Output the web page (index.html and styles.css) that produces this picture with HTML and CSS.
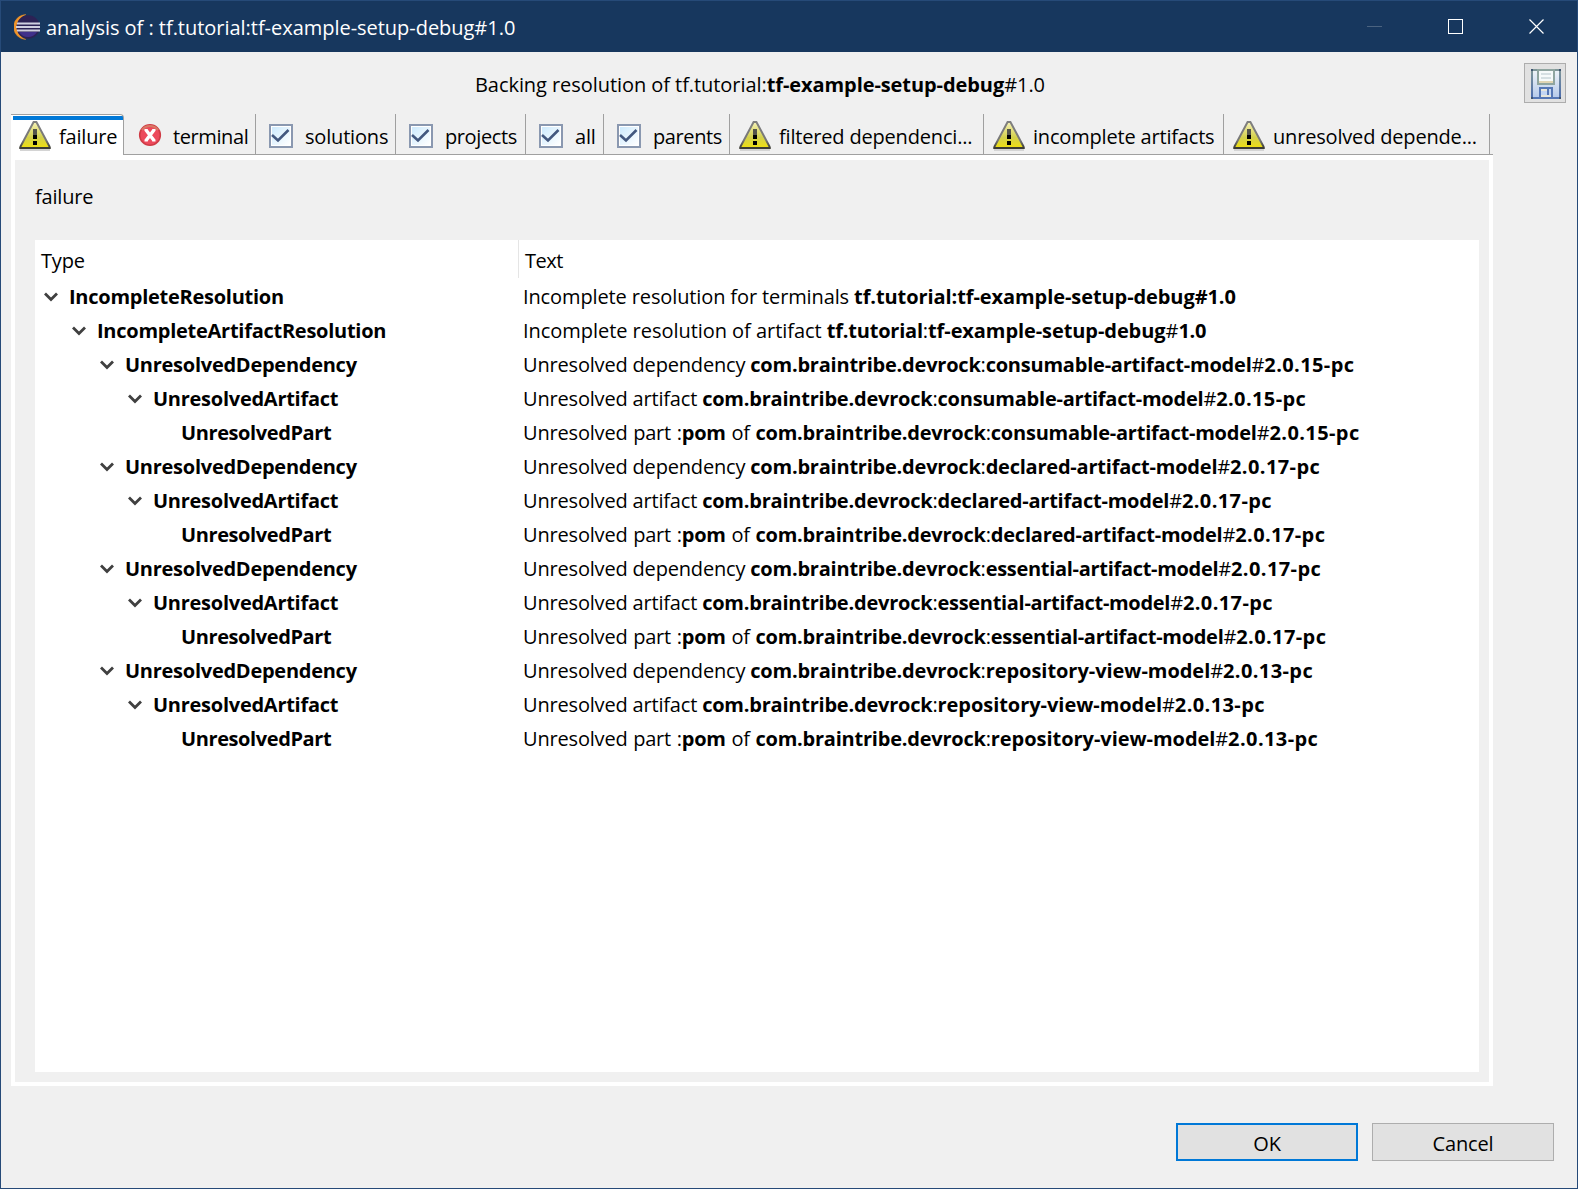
FILE: index.html
```
<!DOCTYPE html>
<html lang="en">
<head>
<meta charset="utf-8">
<title>analysis of : tf.tutorial:tf-example-setup-debug#1.0</title>
<link rel="stylesheet" href="styles.css">
</head>
<body>
<svg class="defs" width="0" height="0">
  <defs>
    <linearGradient id="warnFill" x1="0" y1="0" x2="0" y2="1">
      <stop offset="0" stop-color="#f6f2b8"/><stop offset="0.6" stop-color="#d3d04a"/><stop offset="1" stop-color="#f0e010"/>
    </linearGradient>
    <linearGradient id="warnEdge" x1="0" y1="0" x2="0" y2="1">
      <stop offset="0" stop-color="#808080"/><stop offset="0.7" stop-color="#777"/><stop offset="1" stop-color="#3c3c34"/>
    </linearGradient>
    <linearGradient id="checkFill" x1="0" y1="0" x2="1" y2="1">
      <stop offset="0" stop-color="#cdeafd"/><stop offset="1" stop-color="#ffffff"/>
    </linearGradient>
    <linearGradient id="diskFill" x1="0" y1="0" x2="0" y2="1">
      <stop offset="0" stop-color="#eef3f8"/><stop offset="1" stop-color="#b5c9ea"/>
    </linearGradient>
    <linearGradient id="diskEdge" x1="0" y1="0" x2="0" y2="1">
      <stop offset="0" stop-color="#7f9698"/><stop offset="1" stop-color="#4c6cae"/>
    </linearGradient>
  </defs>
  <symbol id="warning" viewBox="0 0 32 32">
    <path d="M1 30h30" stroke="#d4d4d4" stroke-width="2"/>
    <path d="M14.600 2h2.800L30.500 26.500v1.500h-29v-1.500z" fill="url(#warnFill)" stroke="url(#warnEdge)" stroke-width="2"/>
    <path d="M.5 28h31" stroke="#3c3c34" stroke-width="2"/>
    <path d="M14 9h4v6h-4z" fill="#55554a"/>
    <path d="M14 15h4v4h-4zM14 21h4v4h-4z" fill="#000"/>
  </symbol>
  <symbol id="error" viewBox="0 0 32 32">
    <circle cx="16" cy="15" r="10.300" fill="#ec4a5c" stroke="#cf3b45" stroke-width="1.600"/>
    <path d="M8 10a10 10 0 0 1 16 0" fill="none" stroke="#d97a66" stroke-width="2"/>
    <path d="M12 10l8 10.500M20 10l-8 10.500" stroke="#fff" stroke-width="3.400"/>
    <path d="M10.500 10h3M18.500 10h3M10.500 20.500h3M18.500 20.500h3" stroke="#fff" stroke-width="2"/>
  </symbol>
  <symbol id="check" viewBox="0 0 32 32">
    <rect x="5" y="5" width="22" height="22" fill="#fff" stroke="#8a98b0" stroke-width="2"/>
    <rect x="7" y="7" width="18" height="18" fill="url(#checkFill)"/>
    <path d="M7 15l6 5.500L23.500 10" fill="none" stroke="#43587f" stroke-width="2.600"/>
  </symbol>
  <symbol id="chevron" viewBox="0 0 14 10">
    <path d="M1 1.500l6 6 6-6" fill="none" stroke="#404040" stroke-width="2.800"/>
  </symbol>
</svg>
<div class="window">
  <header class="titlebar">
    <svg class="logo" width="26" height="26" viewBox="0 0 26 26">
      <path d="M12 .5A12.500 12.500 0 0 0 12 25.500A13.200 13.200 0 0 1 12 .5z" fill="#f0942a" stroke="#d98a30" stroke-width=".4"/>
      <circle cx="14.200" cy="13" r="11.700" fill="#2c2255"/>
      <path d="M5 18h18a10.500 10.500 0 0 1-18 0z" fill="#40308a"/>
      <path d="M3 9.500h23M2 13h24M3 16.500h23" stroke="#d0cfe0" stroke-width="2"/>
    </svg>
    <h1 class="caption">analysis of : tf.tutorial:tf-example-setup-debug#1.0</h1>
    <svg class="control" width="81" height="51" viewBox="0 0 81 51"><path d="M33 25.500h15" stroke="#4b6380"/></svg>
    <svg class="control" width="81" height="51" viewBox="0 0 81 51"><rect x="33.500" y="18.500" width="14" height="14" fill="none" stroke="#fff"/></svg>
    <svg class="control" width="81" height="51" viewBox="0 0 81 51"><path d="M33.500 18.500l14 14M47.500 18.500l-14 14" stroke="#fff" stroke-width="1.200"/></svg>
  </header>
  <div class="banner">
    <p class="summary">Backing resolution of tf.tutorial:<b class="setup">tf-example-setup-debug</b>#1.0</p>
    <button class="save" aria-label="Save">
      <svg width="30" height="30" viewBox="0 0 30 30">
        <rect x="1" y="1" width="28" height="28" fill="url(#diskFill)" stroke="url(#diskEdge)" stroke-width="2"/>
        <path d="M0 0h2v2h-2zM28 0h2v2h-2zM0 28h2v2h-2zM28 28h2v2h-2z" fill="#3f5570"/>
        <rect x="7" y="1" width="16" height="14" fill="#f6fafa" stroke="#8fa5a0" stroke-width="2"/>
        <path d="M10 5h10M10 9h10" stroke="#d5dfe2" stroke-width="2"/>
        <path d="M8 13h14" stroke="#e0d5b4" stroke-width="2"/>
        <path d="M9 29V19h12v10" fill="#c3d6f3" stroke="#5577b5" stroke-width="2"/>
        <path d="M10 21h6M10 27h10" stroke="#e6e6dc" stroke-width="2"/>
        <path d="M17 20v6" stroke="#5577b5" stroke-width="2"/>
        <path d="M2 29h26" stroke="#5577b5" stroke-width="2"/>
      </svg>
    </button>
  </div>
  <nav class="tabs">
    <div class="tab selected"><svg class="icon"><use href="#warning"/></svg><span>failure</span></div>
    <div class="tab t1 tight"><svg class="icon"><use href="#error"/></svg><span>terminal</span></div>
    <div class="tab t2"><svg class="icon"><use href="#check"/></svg><span>solutions</span></div>
    <div class="tab t3 tight"><svg class="icon"><use href="#check"/></svg><span>projects</span></div>
    <div class="tab t4"><svg class="icon"><use href="#check"/></svg><span>all</span></div>
    <div class="tab t5 tight"><svg class="icon"><use href="#check"/></svg><span>parents</span></div>
    <div class="tab t6"><svg class="icon"><use href="#warning"/></svg><span>filtered dependenci...</span></div>
    <div class="tab t7"><svg class="icon"><use href="#warning"/></svg><span>incomplete artifacts</span></div>
    <div class="tab t8"><svg class="icon"><use href="#warning"/></svg><span>unresolved depende...</span></div>
  </nav>
  <main class="page">
    <p class="label">failure</p>
    <div class="tree">
      <div class="head"><div class="type">Type</div><div class="text">Text</div></div>
      <div class="row l0"><div class="type"><svg class="chev"><use href="#chevron"/></svg><b>IncompleteResolution</b></div><div class="text terminals">Incomplete resolution for terminals <b class="setup">tf.tutorial:tf-example-setup-debug#1.0</b></div></div>
      <div class="row l1"><div class="type"><svg class="chev"><use href="#chevron"/></svg><b>IncompleteArtifactResolution</b></div><div class="text artifact">Incomplete resolution of artifact <b>tf.tutorial</b>:<b class="setup">tf-example-setup-debug</b>#<b>1.0</b></div></div>
      <div class="row l2"><div class="type"><svg class="chev"><use href="#chevron"/></svg><b>UnresolvedDependency</b></div><div class="text">Unresolved dependency <b>com.braintribe.devrock</b>:<b>consumable-artifact-model</b>#<b class="version">2.0.15-pc</b></div></div>
      <div class="row l3"><div class="type"><svg class="chev"><use href="#chevron"/></svg><b>UnresolvedArtifact</b></div><div class="text">Unresolved artifact <b>com.braintribe.devrock</b>:<b>consumable-artifact-model</b>#<b class="version">2.0.15-pc</b></div></div>
      <div class="row l4"><div class="type"><b>UnresolvedPart</b></div><div class="text">Unresolved part :<b>pom</b> of <b>com.braintribe.devrock</b>:<b>consumable-artifact-model</b>#<b class="version">2.0.15-pc</b></div></div>
      <div class="row l2"><div class="type"><svg class="chev"><use href="#chevron"/></svg><b>UnresolvedDependency</b></div><div class="text">Unresolved dependency <b>com.braintribe.devrock</b>:<b>declared-artifact-model</b>#<b class="version">2.0.17-pc</b></div></div>
      <div class="row l3"><div class="type"><svg class="chev"><use href="#chevron"/></svg><b>UnresolvedArtifact</b></div><div class="text">Unresolved artifact <b>com.braintribe.devrock</b>:<b>declared-artifact-model</b>#<b class="version">2.0.17-pc</b></div></div>
      <div class="row l4"><div class="type"><b>UnresolvedPart</b></div><div class="text">Unresolved part :<b>pom</b> of <b>com.braintribe.devrock</b>:<b>declared-artifact-model</b>#<b class="version">2.0.17-pc</b></div></div>
      <div class="row l2"><div class="type"><svg class="chev"><use href="#chevron"/></svg><b>UnresolvedDependency</b></div><div class="text">Unresolved dependency <b>com.braintribe.devrock</b>:<b class="essential">essential-artifact-model</b>#<b class="version">2.0.17-pc</b></div></div>
      <div class="row l3"><div class="type"><svg class="chev"><use href="#chevron"/></svg><b>UnresolvedArtifact</b></div><div class="text">Unresolved artifact <b>com.braintribe.devrock</b>:<b class="essential">essential-artifact-model</b>#<b class="version">2.0.17-pc</b></div></div>
      <div class="row l4"><div class="type"><b>UnresolvedPart</b></div><div class="text">Unresolved part :<b>pom</b> of <b>com.braintribe.devrock</b>:<b class="essential">essential-artifact-model</b>#<b class="version">2.0.17-pc</b></div></div>
      <div class="row l2"><div class="type"><svg class="chev"><use href="#chevron"/></svg><b>UnresolvedDependency</b></div><div class="text">Unresolved dependency <b>com.braintribe.devrock</b>:<b class="repository">repository-view-model</b>#<b class="version">2.0.13-pc</b></div></div>
      <div class="row l3"><div class="type"><svg class="chev"><use href="#chevron"/></svg><b>UnresolvedArtifact</b></div><div class="text">Unresolved artifact <b>com.braintribe.devrock</b>:<b class="repository">repository-view-model</b>#<b class="version">2.0.13-pc</b></div></div>
      <div class="row l4"><div class="type"><b>UnresolvedPart</b></div><div class="text">Unresolved part :<b>pom</b> of <b>com.braintribe.devrock</b>:<b class="repository">repository-view-model</b>#<b class="version">2.0.13-pc</b></div></div>
    </div>
  </main>
  <footer class="actions">
    <button class="button primary">OK</button>
    <button class="button">Cancel</button>
  </footer>
</div>
</body>
</html>
```
FILE: styles.css
```
* { box-sizing: border-box; margin: 0; }
body { font: 20px/34px "Open Sans", "Noto Sans", sans-serif; color: #000; letter-spacing: -0.18px; }
b { font-weight: 700; letter-spacing: -0.26px; }
.text b { letter-spacing: -0.22px; }
.summary .setup, .text .setup { letter-spacing: -0.08px; }
.text .version { letter-spacing: 0.4px; }
.text .essential { letter-spacing: -0.3px; }
.text .repository { letter-spacing: -0.04px; }
.defs { position: absolute; }

.window { width: 1578px; height: 1189px; border: 1px solid #264a78; background: #f0f0f0; display: flex; flex-direction: column; }
.titlebar { height: 51px; flex: none; display: flex; align-items: center; background: #17375e; color: #fff; }
.logo { margin-left: 13px; }
.caption { flex: 1; margin-left: 6px; padding-top: 2px; font-size: 20px; font-weight: 400; letter-spacing: -0.03px; white-space: nowrap; }
.control { flex: none; }

.banner { height: 62px; flex: none; display: flex; align-items: flex-start; padding: 11px 11px 0 0; }
.summary { flex: 1; padding: 5px 0 0 474px; letter-spacing: -0.06px; white-space: nowrap; }
.save { width: 42px; height: 40px; padding: 0 0 0 1px; border: 1px solid #adadad; background: #e1e1e1; display: grid; place-items: center; }
.save svg { margin-top: 1px; }

.tabs { display: flex; height: 41px; flex: none; margin-left: 10px; width: 1482px; border-bottom: 1px solid #a0a0a0; }
.tab { display: flex; align-items: center; gap: 8px; padding: 4px 0 0 9px; border-right: 1px solid #a0a0a0; white-space: nowrap; overflow: hidden; height: 40px; }
.tab span { padding-top: 2px; }
.tight { letter-spacing: -0.4px; }
.icon { width: 32px; height: 32px; flex: none; }
.tab.selected {
  width: 113px; height: 41px; padding: 2px 0 0 8px; border-top: 1px solid #a0a0a0; border-top-right-radius: 4px;
  background: linear-gradient(#0078d7, #0078d7) 2px 1px / 110px 4px no-repeat #fff;
}
.t1 { width: 132px; padding-left: 10px; gap: 7px; }
.t2 { width: 140px; }
.t3 { width: 130px; }
.t4 { width: 78px; }
.t5 { width: 126px; }
.t6 { width: 254px; }
.t7 { width: 240px; }
.t8 { width: 266px; }

.page { margin-left: 10px; width: 1482px; height: 931px; flex: none; border: 4px solid #fff; border-top-width: 5px; padding: 20px 10px 10px 20px; }
.label { height: 60px; }
.tree { background: #fff; height: 832px; }
.head, .row { display: flex; }
.head { height: 40px; }
.head .type { height: 38px; padding: 4px 0 0 6px; border-right: 1px solid #e5e5e5; }
.head .text { padding: 4px 0 0 6px; letter-spacing: -0.5px; }
.type { width: 484px; flex: none; }
.text { white-space: nowrap; padding-left: 4px; }
.l4 .text { word-spacing: 0.6px; }
.terminals { letter-spacing: -0.12px; }
.artifact { letter-spacing: -0.04px; }
.row .type { display: flex; align-items: center; gap: 11px; }
.chev { width: 14px; height: 10px; }
.l0 .type { padding-left: 9px; }
.l1 .type { padding-left: 37px; }
.l2 .type { padding-left: 65px; }
.l3 .type { padding-left: 93px; }
.l4 .type { padding-left: 146px; }
.l4 .type b { letter-spacing: -0.4px; }

.actions { padding: 37px 23px 0 0; display: flex; justify-content: flex-end; gap: 14px; }
.button { width: 182px; height: 38px; border: 1px solid #adadad; background: #e1e1e1; font: inherit; line-height: 28px; letter-spacing: inherit; padding: 4px 0 0; }
.primary { border: 2px solid #0078d7; }
```
